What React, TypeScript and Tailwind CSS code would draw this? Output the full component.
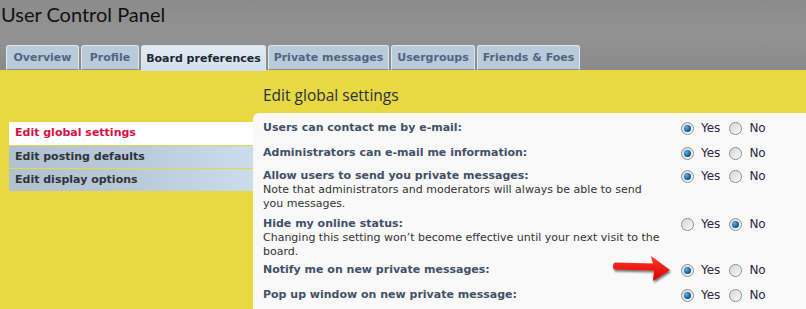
const tabs = [
  { label: "Overview", w: "w-[73px]" },
  { label: "Profile", w: "w-[58px]" },
  { label: "Board preferences", w: "w-[125px]", active: true },
  { label: "Private messages", w: "w-[121px]" },
  { label: "Usergroups", w: "w-[84px]" },
  { label: "Friends & Foes", w: "w-[103px]" },
]

const menu = [
  { label: "Edit global settings", active: true },
  { label: "Edit posting defaults" },
  { label: "Edit display options" },
]

type Row = { title: string; note?: string; yes: boolean; h: string; noteW?: string }

const rows: Row[] = [
  { title: "Users can contact me by e-mail:", yes: true, h: "h-[25px]" },
  { title: "Administrators can e-mail me information:", yes: true, h: "h-[23px]" },
  {
    title: "Allow users to send you private messages:",
    note: "Note that administrators and moderators will always be able to send you messages.",
    yes: true,
    h: "h-[48px]",
    noteW: "max-w-[394px]",
  },
  {
    title: "Hide my online status:",
    note: "Changing this setting won’t become effective until your next visit to the board.",
    yes: false,
    h: "h-[46px]",
  },
  { title: "Notify me on new private messages:", yes: true, h: "h-[25px]" },
  { title: "Pop up window on new private message:", yes: true, h: "h-[25px]" },
]

const Radio = ({ checked }: { checked: boolean }) => (
  <span className="flex h-[13px] w-[13px] items-center justify-center rounded-full border border-[#8d8d8d] bg-gradient-to-br from-[#d4d4d4] to-[#fbfbfb] shadow-[inset_0_0_1px_#fff]">
    {checked && (
      <span className="h-[7px] w-[7px] rounded-full bg-[radial-gradient(circle_at_35%_35%,#5fb4e6,#0d5e96_60%,#083f66)]" />
    )}
  </span>
)

const Arrow = () => (
  <svg width="64" height="34" viewBox="0 0 64 34" className="absolute left-[610px] top-[253px]">
    <defs>
      <filter id="sh" x="-20%" y="-20%" width="140%" height="160%">
        <feDropShadow dx="1" dy="2" stdDeviation="1.2" floodColor="#000" floodOpacity="0.55" />
      </filter>
      <linearGradient id="rg" x1="0" y1="0" x2="0" y2="1">
        <stop offset="0" stopColor="#ff3a2a" />
        <stop offset="1" stopColor="#d40000" />
      </linearGradient>
    </defs>
    <path
      d="M5 9.5 C3 10 2 15 4.5 16.5 L44 17.5 L43 28 L60 17 L41 3 L43 10.5 Z"
      fill="url(#rg)"
      filter="url(#sh)"
    />
  </svg>
)

export default function App() {
  return (
    <div className="relative h-[309px] w-[806px] overflow-hidden bg-[#e8d842] font-['DejaVu_Sans',Verdana,sans-serif]">
      <header className="flex h-[70px] flex-col justify-between bg-[linear-gradient(180deg,#8b8b8b,#939393_50%,#8a8a8a)]">
        <h1 className="pl-[1px] pt-[1px] font-['Lato',sans-serif] text-[20px] leading-[26px] text-[#111]">
          User Control Panel
        </h1>
        <nav className="flex items-end gap-[2px] pl-[6px]">
          {tabs.map((t) => (
            <div
              key={t.label}
              className={`${t.w} flex items-center justify-center rounded-t-[3px] border-t border-l border-r border-[#dfe7ee] pt-px text-[11px] font-bold ${
                t.active
                  ? "mb-[-1px] h-[26px] bg-gradient-to-b from-[#e3ecf4] to-[#cfdfed] text-[#1e2530]"
                  : "h-[25px] border-b border-b-[#8e8e8e] bg-[#b8cbda] text-[#536482]"
              }`}
            >
              {t.label}
            </div>
          ))}
        </nav>
      </header>

      <div className="flex">
        <aside className="w-[253px] shrink-0 pl-[9px] pt-[52px]">
          {menu.map((m, i) => (
            <div
              key={m.label}
              className={`flex items-center pl-[6px] text-[11px] font-bold ${i > 0 ? "mt-px h-[22px]" : "h-[23px]"} ${
                m.active
                  ? "bg-white text-[#d31141]"
                  : "bg-gradient-to-r from-[#b1c1cf] via-[#b9c9d7] to-[#cbdcea] text-[#2f333a]"
              }`}
            >
              {m.label}
            </div>
          ))}
        </aside>

        <main className="flex-1">
          <h2 className="pl-[10px] pt-[15px] font-['Open_Sans',sans-serif] text-[15.5px] leading-[20px] text-[#28313f]">
            Edit global settings
          </h2>
          <div className="mt-[8px] h-[200px] rounded-tl-[6px] bg-[#f9f9f9] pl-[10px] pt-[8px]">
            {rows.map((r) => (
              <div key={r.title} className={`${r.h} flex items-start`}>
                <div className="w-[418px] text-[11px] leading-[14px]">
                  <div className="font-bold text-[#425067]">{r.title}</div>
                  {r.note && <div className={`${r.noteW ?? ""} text-[#333]`}>{r.note}</div>}
                </div>
                <div className="flex h-[14px] items-center text-[12px] text-[#2d2640]">
                  <Radio checked={r.yes} />
                  <span className="ml-[7px] mr-[9px]">Yes</span>
                  <Radio checked={!r.yes} />
                  <span className="ml-[7px]">No</span>
                </div>
              </div>
            ))}
          </div>
        </main>
      </div>

      <Arrow />
    </div>
  )
}
